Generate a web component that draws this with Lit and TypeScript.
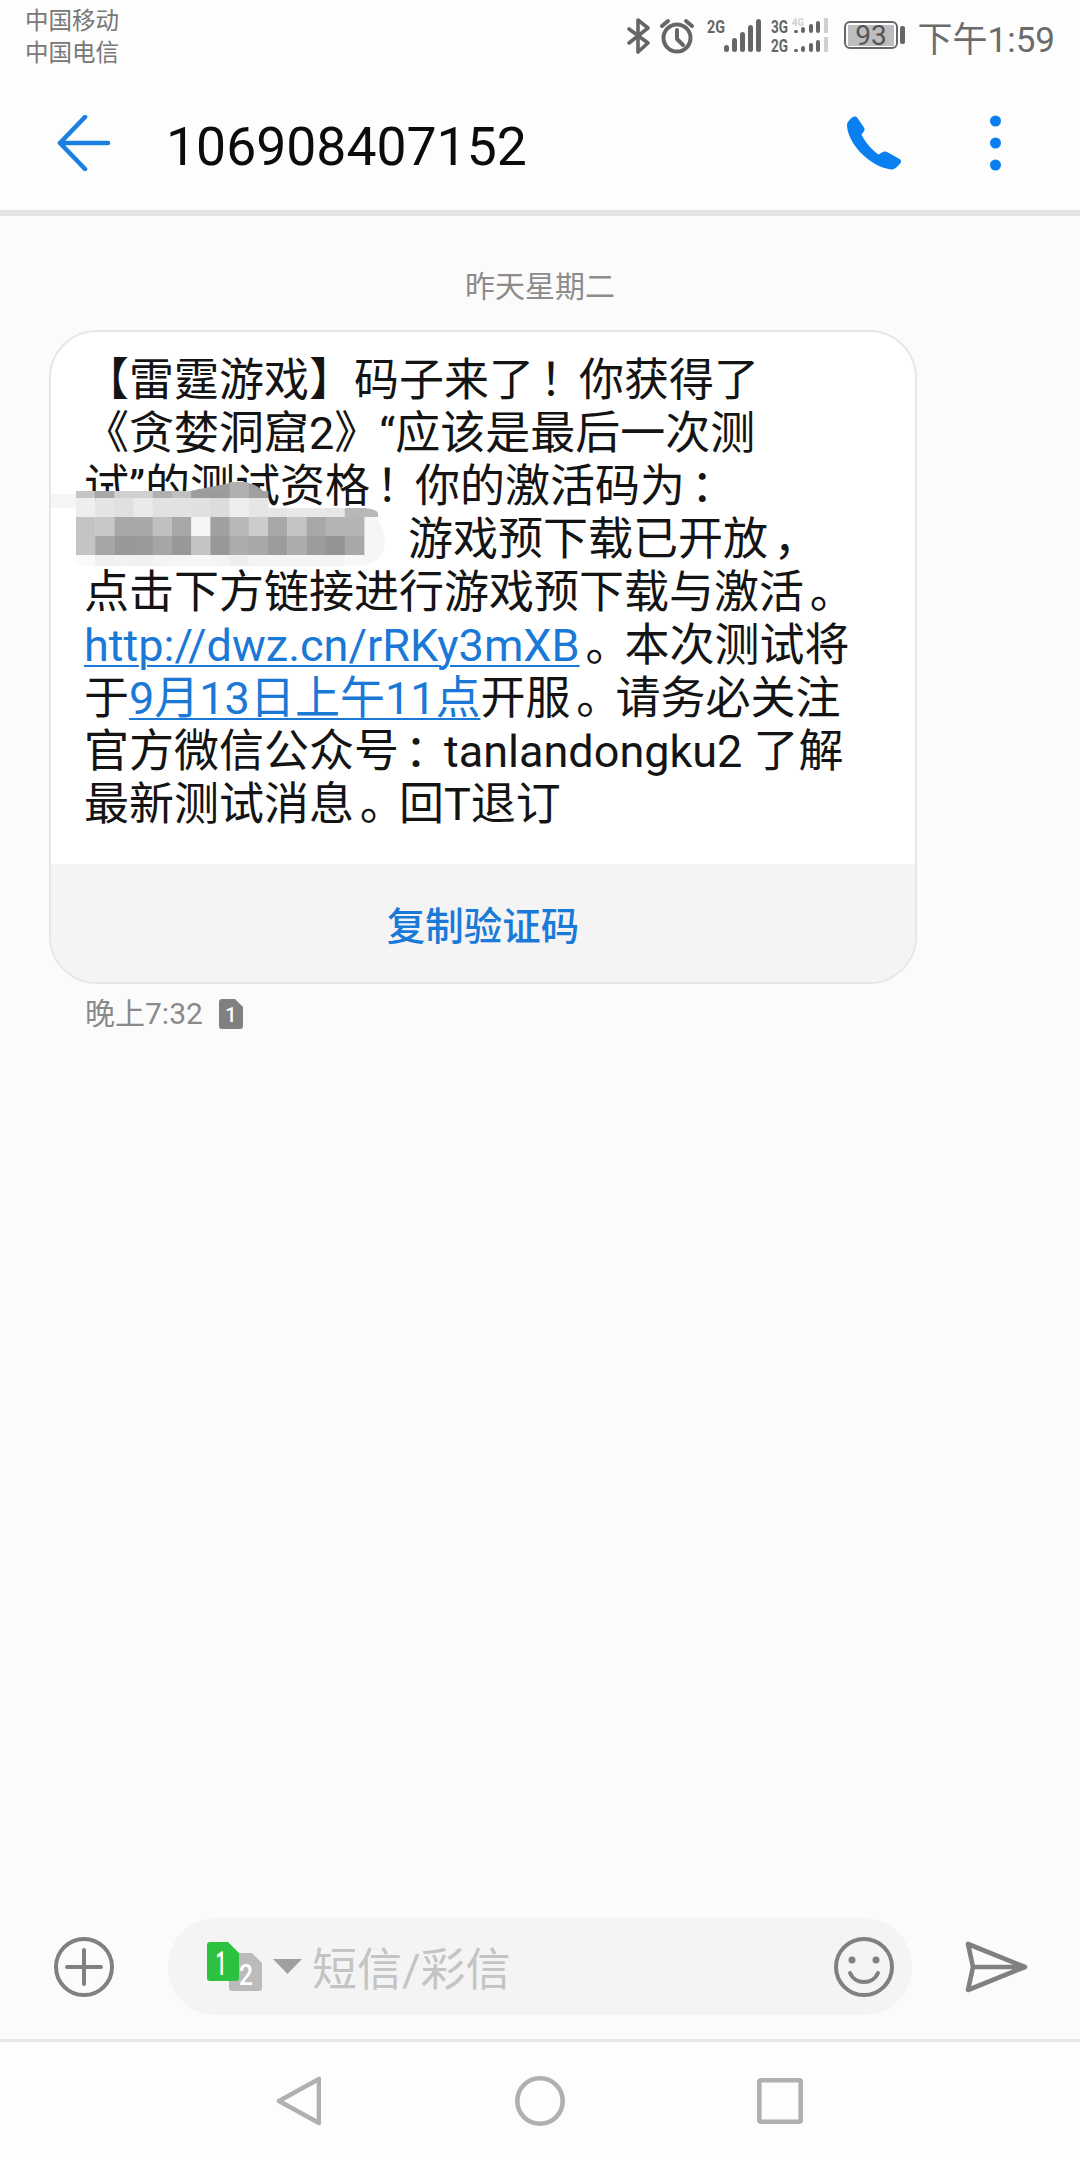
import { LitElement, html, svg, css } from 'lit';
import { customElement } from 'lit/decorators.js';

// mosaic cells of the hidden code, [top, height, greys per 19.2px column]
const MOSAIC: [number, number, string[]][] = [
  [15, 7, ['c5', 'a8', 'd0', 'd0', 'b0', 'c0', '9c', '9c', 'b0', 'a0']],
  [22, 19, ['ee', 'e4', 'e0', 'ea', 'e2', 'e2', 'e0', 'dc', 'ee', 'e6']],
  [32, 9, ['', '', '', '', '', '', '', '', '', '', 'e6', 'e8', 'e8', 'e6', 'b8']],
  [41, 19, ['c4', 'c8', 'a8', 'a8', 'c0', 'a8', 'f6', 'a0', 'b8', 'cc', 'a8', 'c4', 'a8', 'b4', 'b4']],
  [60, 19, ['c4', 'a6', '98', '9a', 'a6', '98', 'c4', '98', 'ac', 'a8', '9c', 'ac', '9c', '94', 'a8']],
  [79, 11, ['fa', 'f0', 'f2', 'f0', 'f4', 'f6', 'f6', 'f4', 'ee', 'f4', 'f4', 'f4', 'f4', 'f4', 'f8']],
];

@customElement('app-root')
export class AppRoot extends LitElement {
  static styles = css`
    :host {
      display: flex;
      flex-direction: column;
      width: 1080px;
      height: 2160px;
      background: #fbfbfb;
      font-family: Roboto, 'Noto Sans CJK SC', sans-serif;
      color: #111;
    }
    svg {
      display: block;
      flex: none;
    }
    .status {
      display: flex;
      align-items: center;
      height: 64px;
      padding: 4px 25px 0 25px;
      background: #fdfdfd;
    }
    .carriers {
      font-size: 23.5px;
      line-height: 32px;
      color: #777;
      margin-top: 2px;
    }
    .status-icons {
      display: flex;
      align-items: center;
      margin-left: auto;
    }
    .alarm {
      margin-left: 8px;
    }
    .signal-one {
      margin-left: 12px;
    }
    .signal-two {
      margin-left: 10px;
    }
    .battery {
      margin-left: 15px;
    }
    .stat-text {
      font-family: Roboto, sans-serif;
      font-weight: 700;
      font-size: 19px;
      fill: #666;
    }
    .stat-faint {
      font-family: Roboto, sans-serif;
      font-weight: 700;
      font-size: 10px;
      fill: #d0d0d0;
    }
    .batt-text {
      font-family: Roboto, sans-serif;
      font-size: 28px;
      fill: #555;
    }
    .clock {
      font-size: 35px;
      color: #6b6b6b;
      margin-left: 13px;
      white-space: nowrap;
    }
    .appbar {
      display: flex;
      align-items: center;
      height: 134px;
      padding: 8px 79px 0 57px;
      background: #fdfdfd;
      border-bottom: 6px solid #e4e4e4;
    }
    .title {
      font-size: 53.5px;
      color: #0c0c0c;
      margin: 6px 0 0 55px;
    }
    .phone {
      margin-left: auto;
    }
    .more {
      margin-left: 88px;
    }
    .thread {
      flex: 1;
      padding: 51px 0 0 49px;
    }
    .date {
      width: 982px;
      text-align: center;
      font-size: 30px;
      line-height: 40px;
      color: #8c8c8c;
      margin-bottom: 23px;
    }
    .bubble {
      position: relative;
      box-sizing: border-box;
      width: 868px;
      border: 2px solid #e6e6e6;
      border-radius: 48px;
      background: #fff;
      overflow: hidden;
    }
    .body {
      padding: 22px 0 33px 33px;
      font-size: 45px;
      line-height: 53px;
      color: #141414;
    }
    .body div {
      white-space: nowrap;
    }
    /* the phone font sets full stops and commas nearer the middle of their cell */
    .p {
      padding-left: 0.13em;
      letter-spacing: -0.13em;
    }
    .after-code {
      padding-left: 324px;
    }
    a {
      color: #1a78d6;
      text-decoration: underline;
      text-decoration-thickness: 2px;
      text-underline-offset: 4px;
    }
    .mosaic {
      position: absolute;
      left: -1px;
      top: 144px;
    }
    .copy {
      height: 118px;
      display: flex;
      align-items: center;
      justify-content: center;
      background: #f4f4f4;
      font-size: 38.5px;
      font-weight: 500;
      color: #1a7ad9;
    }
    .meta {
      display: flex;
      align-items: center;
      gap: 16px;
      margin: 10px 0 0 36px;
      font-size: 30px;
      line-height: 40px;
      color: #8a8a8a;
    }
    .sim-num {
      font-family: Roboto, sans-serif;
      font-weight: 500;
      fill: #fff;
    }
    .composer {
      display: flex;
      align-items: center;
      padding: 0 0 24px 54px;
    }
    .pill {
      display: flex;
      align-items: center;
      box-sizing: border-box;
      width: 744px;
      height: 97px;
      margin-left: 54px;
      padding: 0 18px 0 39px;
      border-radius: 48px;
      background: #f4f4f4;
    }
    .caret {
      margin-left: 11px;
    }
    .placeholder {
      margin-left: 10px;
      font-size: 45px;
      color: #c4c4c4;
      white-space: nowrap;
    }
    .smile {
      margin-left: auto;
    }
    .send {
      margin-left: 52px;
    }
    .nav {
      display: flex;
      align-items: center;
      height: 118px;
      padding-left: 275px;
      background: #fdfdfd;
      border-top: 3px solid #e6e6e6;
    }
    .nav-home {
      margin-left: 194px;
    }
    .nav-recent {
      margin-left: 192px;
    }
  `;

  renderStatusIcons() {
    return html`
      <div class="status-icons">
        <svg width="24" height="38" viewBox="0 0 24 38" fill="none" stroke="#666" stroke-width="3.6" stroke-linecap="round" stroke-linejoin="round">
          <path d="M2 12L21 26L11 35V3L21 11L2 26" />
        </svg>
        <svg class="alarm" width="36" height="36" viewBox="0 0 36 36" fill="none" stroke="#666" stroke-width="4" stroke-linecap="round" stroke-linejoin="round">
          <circle cx="18" cy="20" r="13.5" />
          <path d="M18 12V21L24 27M3 8L9 3M33 8L27 3" />
        </svg>
        <svg class="signal-one" width="54" height="42" viewBox="0 -3 54 42">
          <text class="stat-text" x="0" y="15" textLength="18" lengthAdjust="spacingAndGlyphs">2G</text>
          <g fill="#666">
            <rect x="17" y="27" width="5" height="7" rx="2.5" />
            <rect x="25" y="20" width="5" height="14" rx="2.5" />
            <rect x="33" y="14" width="5" height="20" rx="2.5" />
            <rect x="41" y="7" width="5" height="27" rx="2.5" />
            <rect x="49" y="1" width="5" height="33" rx="2.5" />
          </g>
        </svg>
        <svg class="signal-two" width="58" height="42" viewBox="0 -3 58 42">
          <text class="stat-text" x="0" y="15" textLength="17" lengthAdjust="spacingAndGlyphs">3G</text>
          <text class="stat-text" x="0" y="34" textLength="17" lengthAdjust="spacingAndGlyphs">2G</text>
          <text class="stat-faint" x="21" y="8" textLength="12" lengthAdjust="spacingAndGlyphs">4G</text>
          ${[15, 34].map(
            (bottom) => svg`
              <g fill="#666">
                <rect x="23" y=${bottom - 3} width="4" height="3" rx="1.5" />
                <rect x="30" y=${bottom - 6} width="4" height="6" rx="2" />
                <rect x="38" y=${bottom - 9} width="4" height="9" rx="2" />
                <rect x="45" y=${bottom - 12} width="4" height="12" rx="2" />
              </g>
              <rect x="53" y=${bottom - 15} width="4" height="15" fill="#d0d0d0" />
            `,
          )}
        </svg>
        <svg class="battery" width="61" height="38" viewBox="0 -4 61 38">
          <rect x="1" y="1" width="52" height="26" rx="5" fill="none" stroke="#666" stroke-width="2" />
          <rect x="4" y="4" width="46" height="21" fill="#bdbdbd" />
          <text class="batt-text" x="27" y="24" text-anchor="middle">93</text>
          <rect x="56" y="5" width="5" height="18" rx="2" fill="#666" />
        </svg>
      </div>
    `;
  }

  renderMosaic() {
    return html`
      <svg class="mosaic" width="340" height="100" viewBox="0 0 340 100">
        <path d="M0 18H26V90H312C332 86 339 72 332 52C326 38 317 34 302 32H0Z" fill="#f6f6f6" />
        <path d="M140 15L180 7C195 4 210 7 218 22H140Z" fill="#9e9e9e" />
        <path d="M180 6C185 6 195 5 199 7V22H180Z" fill="#b0b0b0" />
        <path d="M313 32H316C320 33 326 33 328 37V41H313Z" fill="#b8b8b8" />
        ${MOSAIC.map(([top, height, cols]) =>
          cols.map((grey, i) =>
            grey
              ? svg`<rect x=${26 + i * 19.2} y=${top} width="19.6" height=${height} fill=${`#${grey}${grey}${grey}`} />`
              : '',
          ),
        )}
      </svg>
    `;
  }

  render() {
    return html`
      <div class="status">
        <div class="carriers">
          <div>中国移动</div>
          <div>中国电信</div>
        </div>
        ${this.renderStatusIcons()}
        <div class="clock">下午1:59</div>
      </div>

      <div class="appbar">
        <svg width="54" height="56" viewBox="0 0 54 56" fill="none" stroke="#1a7fe0" stroke-width="4.6" stroke-linecap="round" stroke-linejoin="round">
          <path d="M51 28H3M28 2L3 28L28 54" />
        </svg>
        <div class="title">106908407152</div>
        <svg class="phone" width="55" height="54" viewBox="0 0 55 54" fill="#0a7ff0">
          <path d="M3 3.5C5 1 8-1 10.5 2L17 11.5C18 13.5 17.5 15 16 16.5L14.5 18.5C18 26 25 34 31.5 38.5L35 36.5C37 35.2 39 35.3 41 36.5L52.5 43C54.5 44.5 54.5 46 53 47.5C50 51 48 53.5 44 53.5C20 50 0 25 0 9C0 7 1.5 5 3 3.5Z" />
        </svg>
        <svg class="more" width="11" height="56" viewBox="0 0 11 56" fill="#0a7ff0">
          <circle cx="5.5" cy="6" r="5.5" />
          <circle cx="5.5" cy="28" r="5.5" />
          <circle cx="5.5" cy="50" r="5.5" />
        </svg>
      </div>

      <div class="thread">
        <div class="date">昨天星期二</div>
        <div class="bubble">
          <div class="body">
            <div>【雷霆游戏】码子来了<span class="p">！</span>你获得了</div>
            <div>《贪婪洞窟2》“应该是最后一次测</div>
            <div>试”的测试资格<span class="p">！</span>你的激活码为<span class="p">：</span></div>
            <div class="after-code">游戏预下载已开放<span class="p">，</span></div>
            <div>点击下方链接进行游戏预下载与激活<span class="p">。</span></div>
            <div><a>http://dwz.cn/rRKy3mXB</a><span class="p">。</span>本次测试将</div>
            <div>于<a>9月13日上午11点</a>开服<span class="p">。</span>请务必关注</div>
            <div>官方微信公众号<span class="p">：</span>tanlandongku2 了解</div>
            <div>最新测试消息<span class="p">。</span>回T退订</div>
          </div>
          ${this.renderMosaic()}
          <div class="copy">复制验证码</div>
        </div>
        <div class="meta">
          <span>晚上7:32</span>
          <svg width="24" height="30" viewBox="0 0 24 30">
            <path d="M3 0H16L24 8V27C24 29 23 30 21 30H3C1 30 0 29 0 27V3C0 1 1 0 3 0Z" fill="#808080" />
            <text class="sim-num" x="12" y="23" font-size="20" text-anchor="middle">1</text>
          </svg>
        </div>
      </div>

      <div class="composer">
        <svg width="60" height="60" viewBox="0 0 60 60" fill="none" stroke="#808080" stroke-width="4" stroke-linecap="round">
          <circle cx="30" cy="30" r="28" />
          <path d="M13 30H47M30 13V47" />
        </svg>
        <div class="pill">
          <svg width="55" height="49" viewBox="0 0 55 49">
            <path d="M25 11H45L55 21V46C55 48 54 49 52 49H25C23 49 22 48 22 46V14C22 12 23 11 25 11Z" fill="#bbb" />
            <text class="sim-num" x="39" y="43" font-size="30" text-anchor="middle" textLength="14" lengthAdjust="spacingAndGlyphs">2</text>
            <path d="M3 0H21L32 11V36C32 38 31 39 29 39H3C1 39 0 38 0 36V3C0 1 1 0 3 0Z" fill="#2cc13f" />
            <text class="sim-num" x="14" y="33" font-size="33" text-anchor="middle" textLength="11" lengthAdjust="spacingAndGlyphs">1</text>
          </svg>
          <svg class="caret" width="29" height="15" viewBox="0 0 29 15">
            <path d="M0 0H29L14.5 15Z" fill="#a0a0a0" />
          </svg>
          <div class="placeholder">短信/彩信</div>
          <svg class="smile" width="60" height="60" viewBox="0 0 60 60" fill="none" stroke="#808080" stroke-width="4" stroke-linecap="round">
            <circle cx="30" cy="30" r="28" />
            <path d="M16 36C21 48 39 48 44 36" />
            <circle cx="18" cy="23" r="3.5" fill="#808080" stroke="none" />
            <circle cx="42" cy="23" r="3.5" fill="#808080" stroke="none" />
          </svg>
        </div>
        <svg class="send" width="64" height="52" viewBox="0 0 64 52" fill="none" stroke="#808080" stroke-width="4.6" stroke-linejoin="round" stroke-linecap="round">
          <path d="M61 26L4 3L9 26L4 49ZM9 26H61" />
        </svg>
      </div>

      <div class="nav">
        <svg width="46" height="50" viewBox="0 0 46 50" fill="none" stroke="#b0b0b0" stroke-width="4.6" stroke-linejoin="round">
          <path d="M44 3V47L4 25Z" />
        </svg>
        <svg class="nav-home" width="50" height="50" viewBox="0 0 50 50" fill="none" stroke="#b0b0b0" stroke-width="4.6">
          <circle cx="25" cy="25" r="22.7" />
        </svg>
        <svg class="nav-recent" width="46" height="46" viewBox="0 0 46 46" fill="none" stroke="#b0b0b0" stroke-width="4.6" stroke-linejoin="round">
          <rect x="2.3" y="2.3" width="41.4" height="41.4" rx="1.5" />
        </svg>
      </div>
    `;
  }
}
